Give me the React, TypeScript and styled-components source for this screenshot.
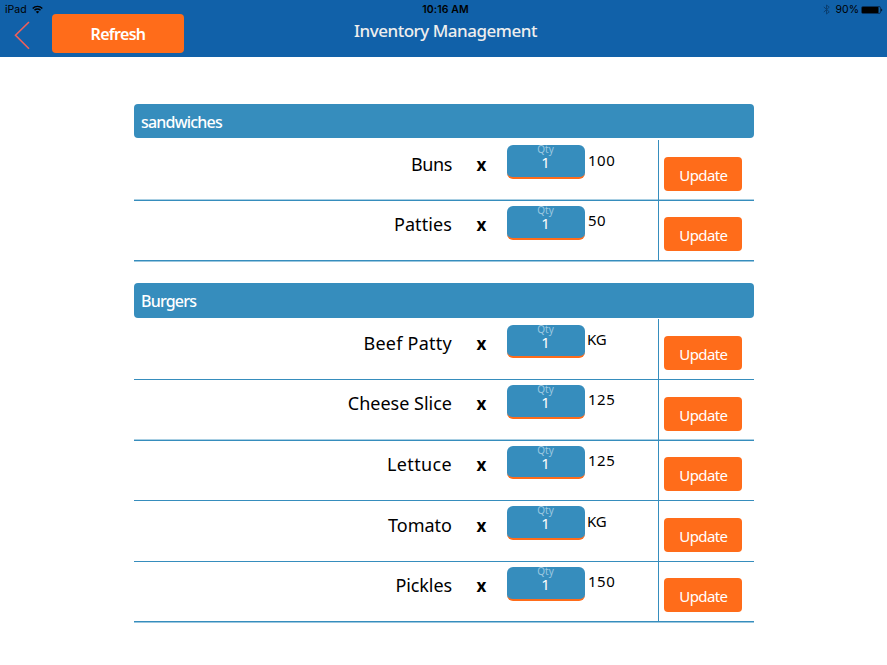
import React from "react";
import styled, { createGlobalStyle } from "styled-components";

const BLUE = "#368dbd";
const ORANGE = "#ff6c1a";

const GlobalStyle = createGlobalStyle`
  * { box-sizing: border-box; }
  body {
    margin: 0;
    background: #fff;
    color: #000;
    font-family: "Noto Sans", "Open Sans", sans-serif;
    overflow: hidden;
  }
  svg { flex: none; }
`;

const Screen = styled.div`
  width: 887px;
  height: 665px;
  background: #fff;
`;

const TopBar = styled.header`
  height: 57px;
  background: #1161a9;
`;

const StatusBar = styled.div`
  display: grid;
  grid-template-columns: 1fr auto 1fr;
  align-items: center;
  height: 14px;
  padding: 4px 4px 0 5px;
  font: 400 10.5px/10px Inter, sans-serif;
`;

const StatusGroup = styled.div<{ $end?: boolean }>`
  display: flex;
  align-items: center;
  justify-content: ${(p) => (p.$end ? "flex-end" : "flex-start")};
`;

const Clock = styled.div`
  padding-left: 3px;
  font-weight: 600;
  letter-spacing: 0.1px;
`;

const NavBar = styled.div`
  display: grid;
  grid-template-columns: 52px 132px 1fr 184px;
  height: 43px;
`;

const BackButton = styled.button`
  display: flex;
  padding: 7px 0 0 14px;
  border: 0;
  background: none;
`;

const RefreshButton = styled.button`
  height: 39px;
  padding: 2px 0 0;
  border: 0;
  border-radius: 4px;
  background: ${ORANGE};
  color: #fff;
  font: 600 16px/37px "Noto Sans", sans-serif;
  letter-spacing: -0.7px;
`;

const Title = styled.h1`
  margin: 4px 0 0;
  padding-left: 4px;
  text-align: center;
  color: #eee;
  font-size: 17px;
  font-weight: 500;
  line-height: 25px;
  letter-spacing: -0.48px;
`;

const Content = styled.main`
  width: 619.5px;
  margin: 47px 0 0 134px;
`;

const Section = styled.section`
  margin-bottom: 21.8px;
`;

const SectionHeader = styled.h2`
  height: 34.4px;
  margin: 0 0 1.8px;
  padding: 2px 7px 0;
  border-radius: 4px;
  background: ${BLUE};
  color: #fff;
  font-size: 16px;
  font-weight: 500;
  line-height: 33px;
  letter-spacing: -0.8px;
`;

type Shade = "above" | "below" | "none";

const shades: Record<Shade, string> = {
  above: "inset 0 -1px 0 #a9cfe3",
  below: "0 1px 0 #9bc7df",
  none: "none",
};

const Row = styled.div<{ $shade: Shade }>`
  display: grid;
  grid-template-columns: 318px 55px 78px 73px 1fr;
  height: 60.6px;
  border-bottom: 1px solid ${BLUE};
  box-shadow: ${(p) => shades[p.$shade]};
`;

const Name = styled.div<{ $spacing: number }>`
  padding-top: 11.4px;
  text-align: right;
  white-space: nowrap;
  font-size: 18px;
  line-height: 25px;
  letter-spacing: ${(p) => p.$spacing}px;
`;

const Times = styled.div`
  padding: 11.4px 0 0 24.5px;
  font-size: 17px;
  font-weight: 700;
  line-height: 25px;
`;

const QtyField = styled.label`
  display: flex;
  flex-direction: column;
  align-items: center;
  height: 33.6px;
  margin-top: 5.3px;
  padding-right: 1px;
  border-bottom: 2px solid ${ORANGE};
  border-radius: 6px;
  background: ${BLUE};
  color: #fff;
`;

const QtyLabel = styled.span`
  height: 9px;
  color: #9dc9e1;
  font-size: 10px;
  line-height: 8px;
`;

const QtyValue = styled.span`
  font-size: 15px;
  line-height: 17px;
`;

const Stock = styled.div<{ $unit: boolean }>`
  padding: 8.4px 0 0 ${(p) => (p.$unit ? 2 : 3)}px;
  font-size: 15px;
  line-height: 22px;
  letter-spacing: ${(p) => (p.$unit ? -0.3 : 0.5)}px;
`;

const ActionCell = styled.div`
  height: 60.6px;
  padding: 16.6px 0 0 5.4px;
  border-left: 1px solid ${BLUE};
`;

const UpdateButton = styled.button`
  display: block;
  width: 78px;
  height: 34px;
  padding: 2px 0 0;
  border: 0;
  border-radius: 4px;
  background: ${ORANGE};
  color: #fff;
  font: 400 15px/32px "Noto Sans", sans-serif;
  letter-spacing: -0.6px;
`;

const WifiIcon = () => (
  <svg width="11" height="9" viewBox="0 0 11 9">
    <g fill="none" stroke="#000" strokeWidth="1.4">
      <path d="M.7 3.4C3.3.7 7.7.7 10.3 3.4" />
      <path d="M2.5 5.3c1.6-1.7 4.4-1.7 6 0" />
    </g>
    <path d="M3.8 6.7c1-.9 2.4-.9 3.4 0L5.5 8.6z" />
  </svg>
);

const BluetoothIcon = () => (
  <svg width="7" height="11" viewBox="0 0 7 11">
    <path d="M.8 2.9 6.2 7.8 3.5 10V1l2.7 2.2L.8 8.1" fill="none" stroke="#0b3f70" strokeWidth="1" />
  </svg>
);

const BatteryIcon = () => (
  <svg width="22" height="8" viewBox="0 0 22 8">
    <rect x=".5" y=".5" width="19" height="7" rx="1.5" fill="none" stroke="#06264a" strokeWidth=".8" />
    <rect x="1" y="1" width="16.5" height="6" rx=".5" />
    <path d="M20.3 2.5c1.2.5 1.2 2.5 0 3z" />
  </svg>
);

const Spacer = styled.span<{ $w: number }>`
  width: ${(p) => p.$w}px;
`;

type Item = { name: string; stock: string; spacing: number; shade: Shade };

const sections: { title: string; items: Item[] }[] = [
  {
    title: "sandwiches",
    items: [
      { name: "Buns", stock: "100", spacing: -0.4, shade: "above" },
      { name: "Patties", stock: "50", spacing: 0.1, shade: "below" },
    ],
  },
  {
    title: "Burgers",
    items: [
      { name: "Beef Patty", stock: "KG", spacing: 0.25, shade: "none" },
      { name: "Cheese Slice", stock: "125", spacing: 0, shade: "above" },
      { name: "Lettuce", stock: "125", spacing: 0.35, shade: "none" },
      { name: "Tomato", stock: "KG", spacing: 0, shade: "none" },
      { name: "Pickles", stock: "150", spacing: -0.1, shade: "below" },
    ],
  },
];

export default function App() {
  return (
    <Screen>
      <GlobalStyle />
      <TopBar>
        <StatusBar>
          <StatusGroup>
            iPad
            <Spacer $w={5} />
            <WifiIcon />
          </StatusGroup>
          <Clock>10:16 AM</Clock>
          <StatusGroup $end>
            <BluetoothIcon />
            <Spacer $w={6} />
            90%
            <Spacer $w={2} />
            <BatteryIcon />
          </StatusGroup>
        </StatusBar>
        <NavBar>
          <BackButton aria-label="Back">
            <svg width="16" height="29" viewBox="0 0 16 29">
              <path d="M15 1 1.5 14.2 15 27.8" fill="none" stroke="#f0605a" strokeWidth="1.6" />
            </svg>
          </BackButton>
          <RefreshButton>Refresh</RefreshButton>
          <Title>Inventory Management</Title>
        </NavBar>
      </TopBar>
      <Content>
        {sections.map((section) => (
          <Section key={section.title}>
            <SectionHeader>{section.title}</SectionHeader>
            {section.items.map((item) => (
              <Row key={item.name} $shade={item.shade}>
                <Name $spacing={item.spacing}>{item.name}</Name>
                <Times>x</Times>
                <QtyField>
                  <QtyLabel>Qty</QtyLabel>
                  <QtyValue>1</QtyValue>
                </QtyField>
                <Stock $unit={item.stock === "KG"}>{item.stock}</Stock>
                <ActionCell>
                  <UpdateButton>Update</UpdateButton>
                </ActionCell>
              </Row>
            ))}
          </Section>
        ))}
      </Content>
    </Screen>
  );
}
